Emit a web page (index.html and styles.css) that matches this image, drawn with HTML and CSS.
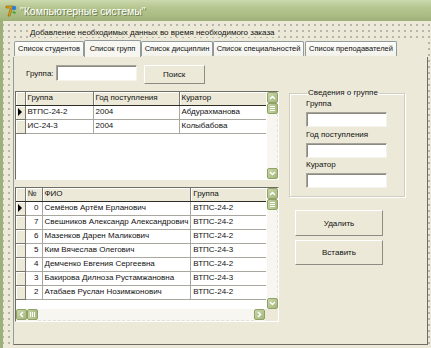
FILE: index.html
```html
<!DOCTYPE html>
<html lang="ru">
<head>
  <meta charset="UTF-8">
  <title>Компьютерные системы</title>
  <link rel="stylesheet" href="styles.css">
</head>
<body>

  <div class="window">
    <!-- заголовок окна -->
    <div class="titlebar">
      <svg class="app-icon" width="12" height="13" viewBox="0 0 12 13">
        <path d="M1 2 L8 2 L5 12 L3 12 L5.5 4 L1 4 Z" fill="#E8A317" stroke="#8A5A00" stroke-width="0.6"/>
        <circle cx="9" cy="4" r="2.3" fill="#2F7FD0"/>
        <path d="M7 8 Q10 6 11 9 Q9 11 7 8 Z" fill="#3FA33F"/>
      </svg>
      <span class="title">"Компьютерные системы"</span>
    </div>

    <div class="form">
      <div class="caption"><span>Добавление необходимых данных во время необходимого заказа</span></div>

      <div class="tabs">
        <div class="tab w1">Список студентов</div>
        <div class="tab w2 active">Список групп</div>
        <div class="tab w3">Список дисциплин</div>
        <div class="tab w4">Список специальностей</div>
        <div class="tab w5">Список преподавателей</div>
      </div>

      <div class="sheet">
        <div class="col-left">
          <div class="search">
            <span class="search-label">Группа:</span>
            <div class="edit search-edit"></div>
            <div class="btn search-btn">Поиск</div>
          </div>

          <!-- таблица групп -->
          <div class="grid grid-groups">
            <div class="grid-top">
              <div class="grid-body">
                <table>
                  <colgroup><col class="c-ind"><col style="width:68px"><col style="width:86px"><col style="width:90px"></colgroup>
                  <tr class="head"><td></td><td>Группа</td><td>Год поступления</td><td>Куратор</td></tr>
                  <tr><td class="ind"><i class="arrow"></i></td><td>ВТПС-24-2</td><td>2004</td><td>Абдурахманова</td></tr>
                  <tr><td class="ind"></td><td>ИС-24-3</td><td>2004</td><td>Колыбабова</td></tr>
                </table>
              </div>
              <div class="vscroll">
                <div class="sb-btn"><svg width="7" height="5" viewBox="0 0 7 5"><path d="M1 4 L3.5 1.5 L6 4" fill="none" stroke="#fff" stroke-width="1.5"/></svg></div>
                <div class="sb-thumb"><i></i><i></i><i></i></div>
                <div class="sb-track"></div>
                <div class="sb-btn"><svg width="7" height="5" viewBox="0 0 7 5"><path d="M1 1 L3.5 3.5 L6 1" fill="none" stroke="#fff" stroke-width="1.5"/></svg></div>
              </div>
            </div>
          </div>

          <!-- таблица студентов -->
          <div class="grid grid-students">
            <div class="grid-top">
              <div class="grid-body">
                <table>
                  <colgroup><col class="c-ind"><col style="width:17px"><col style="width:145px"><col style="width:80px"></colgroup>
                  <tr class="head"><td></td><td>№</td><td>ФИО</td><td>Группа</td></tr>
                  <tr><td class="ind"><i class="arrow"></i></td><td class="num">0</td><td>Семёнов Артём Ерланович</td><td>ВТПС-24-2</td></tr>
                  <tr><td class="ind"></td><td class="num">7</td><td>Свешников Александр Александрович</td><td>ВТПС-24-2</td></tr>
                  <tr><td class="ind"></td><td class="num">6</td><td>Мазенков Дарен Маликович</td><td>ВТПС-24-2</td></tr>
                  <tr><td class="ind"></td><td class="num">5</td><td>Ким Вячеслав Олегович</td><td>ВТПС-24-3</td></tr>
                  <tr><td class="ind"></td><td class="num">4</td><td>Демченко Евгения Сергеевна</td><td>ВТПС-24-2</td></tr>
                  <tr><td class="ind"></td><td class="num">3</td><td>Бакирова Дилноза Рустамжановна</td><td>ВТПС-24-3</td></tr>
                  <tr><td class="ind"></td><td class="num">2</td><td>Атабаев Руслан Нозимжонович</td><td>ВТПС-24-2</td></tr>
                </table>
              </div>
              <div class="vscroll">
                <div class="sb-btn"><svg width="7" height="5" viewBox="0 0 7 5"><path d="M1 4 L3.5 1.5 L6 4" fill="none" stroke="#fff" stroke-width="1.5"/></svg></div>
                <div class="sb-thumb"><i></i><i></i><i></i></div>
                <div class="sb-track"></div>
                <div class="sb-btn"><svg width="7" height="5" viewBox="0 0 7 5"><path d="M1 1 L3.5 3.5 L6 1" fill="none" stroke="#fff" stroke-width="1.5"/></svg></div>
              </div>
            </div>
            <div class="hscroll">
              <div class="sb-btn"><svg width="5" height="7" viewBox="0 0 5 7"><path d="M4 1 L1.5 3.5 L4 6" fill="none" stroke="#fff" stroke-width="1.5"/></svg></div>
              <div class="sb-thumb h"><i></i><i></i><i></i></div>
              <div class="sb-track h"></div>
              <div class="sb-btn"><svg width="5" height="7" viewBox="0 0 5 7"><path d="M1 1 L3.5 3.5 L1 6" fill="none" stroke="#fff" stroke-width="1.5"/></svg></div>
              <div class="sb-corner"></div>
            </div>
          </div>
        </div>

        <div class="col-right">
          <fieldset class="groupbox">
            <legend>Сведения о группе</legend>
            <div class="field-label first">Группа</div>
            <div class="edit field-edit"></div>
            <div class="field-label">Год поступления</div>
            <div class="edit field-edit"></div>
            <div class="field-label last">Куратор</div>
            <div class="edit field-edit"></div>
          </fieldset>
          <div class="btn big del">Удалить</div>
          <div class="btn big ins">Вставить</div>
        </div>
      </div>
    </div>
  </div>

</body>
</html>
```

FILE: styles.css
```css
* { box-sizing: border-box; }

body {
  margin: 0;
  width: 431px;
  height: 348px;
  overflow: hidden;
  background: #ECE9D8;
  color: #111;
  font-family: "Liberation Sans", Arial, sans-serif;
  font-size: 8px;
}

.window {
  height: 348px;
  display: flex;
  flex-direction: column;
}

.titlebar {
  flex: none;
  height: 21px;
  display: flex;
  align-items: center;
  gap: 3px;
  padding-left: 5px;
  background: linear-gradient(#CCD9AE, #B6C690 35%, #A8BA82 80%, #9CAF76);
}
.app-icon { flex: none; }
.title {
  color: #fff;
  font-size: 10.5px;
  text-shadow: 1px 1px 0 #6E7F4A;
}

.form {
  flex: 1;
  display: flex;
  flex-direction: column;
  padding: 0 3px 3px 10px;
  border-left: 3px solid #9DB07A;
  background-color: #ECE9D8;
  background-image: radial-gradient(circle, #444 0.5px, transparent 0.8px);
  background-size: 6px 6px;
  background-position: -3px 1px;
}

.caption {
  height: 19px;
  padding: 7px 0 0 17px;
  line-height: 10px;
}
.caption span { background: #ECE9D8; padding-right: 2px; }

/* вкладки */
.tabs {
  display: flex;
  align-items: flex-end;
  height: 17px;
  padding-left: 1px;
  background: #ECE9D8;
  position: relative;
  z-index: 1;
  font-size: 7.5px;
}
.tab {
  height: 15px;
  line-height: 13px;
  text-align: center;
  white-space: nowrap;
  overflow: hidden;
  border: 1px solid #919B9C;
  border-bottom: none;
  border-radius: 2px 2px 0 0;
  background: linear-gradient(#FDFDFB, #F2F1EA);
  margin-bottom: 1px;
}
.tab.active {
  height: 17px;
  line-height: 15px;
  margin-bottom: 0;
  background: #F7F6F1;
}
.w1 { width: 70px; }
.w2 { width: 57px; }
.w3 { width: 72px; }
.w4 { width: 91px; }
.w5 { width: 92px; margin-left: 1px; }

.sheet {
  flex: 1;
  display: flex;
  margin-top: -1px;
  border: 1px solid #919B9C;
  border-right-color: #6F6E66;
  border-bottom-color: #6F6E66;
  background: #ECE9D8;
}

.col-left {
  width: 264px;
  margin-left: 1px;
  display: flex;
  flex-direction: column;
}

.search {
  display: flex;
  align-items: flex-start;
  height: 19px;
  margin-top: 8px;
}
.search-label { margin: 4px 2px 0 11px; line-height: 10px; }
.search-edit { width: 81px; height: 16px; }
.search-btn { width: 61px; height: 19px; margin-left: 7px; }

.edit {
  background: #fff;
  border: 1px solid #A6A49A;
  border-right-color: #F4F3EE;
  border-bottom-color: #F4F3EE;
  box-shadow: inset 1px 1px 0 #8C8A80;
}

.btn {
  display: flex;
  align-items: center;
  justify-content: center;
  border: 1px solid;
  border-color: #fff #8E8C82 #8E8C82 #fff;
  background: #ECE9D8;
}

/* таблицы */
.grid {
  width: 264px;
  margin-top: 7px;
  display: flex;
  flex-direction: column;
  border: 1px solid;
  border-color: #6F6E66 #fff #fff #6F6E66;
  background: #fff;
}
.grid-groups { height: 89px; }
.grid-students { height: 135px; }
.grid-top { flex: 1; display: flex; min-height: 0; }
.grid-body { flex: 1; overflow: hidden; }

table {
  border-collapse: collapse;
  table-layout: fixed;
  width: max-content;
}
.c-ind { width: 9px; }
td {
  height: 14px;
  padding: 0 2px;
  white-space: nowrap;
  overflow: hidden;
  line-height: 10px;
  border-right: 1px solid #A8A8A0;
  border-bottom: 1px solid #A8A8A0;
}
tr.head td {
  height: 13px;
  background: #ECE9D8;
  border-right-color: #7A786E;
  border-bottom-color: #2E2D28;
  box-shadow: inset 1px 1px 0 #fff;
}
td.ind {
  padding: 0;
  background: #ECE9D8;
  border-right-color: #7A786E;
  border-bottom-color: #7A786E;
  box-shadow: inset 1px 1px 0 #fff;
}
td.num { text-align: right; padding-right: 3px; }
.arrow {
  display: block;
  width: 0;
  height: 0;
  margin-left: 2px;
  border-left: 4px solid #000;
  border-top: 4px solid transparent;
  border-bottom: 4px solid transparent;
}

/* полосы прокрутки */
.vscroll {
  width: 12px;
  display: flex;
  flex-direction: column;
  background: #F7F6F1;
  border-left: 1px solid #fff;
}
.sb-btn {
  flex: none;
  width: 11px;
  height: 11px;
  display: flex;
  align-items: center;
  justify-content: center;
  border-radius: 2px;
  border: 1px solid #8EA266;
  background: linear-gradient(135deg, #C9D6A8, #A5B77E);
}
.sb-thumb {
  flex: none;
  width: 11px;
  height: 11px;
  display: flex;
  flex-direction: column;
  align-items: center;
  justify-content: center;
  gap: 1px;
  border-radius: 2px;
  border: 1px solid #8EA266;
  background: linear-gradient(90deg, #C3D1A0, #A9BA83);
}
.sb-thumb i { display: block; width: 5px; height: 1px; background: #fff; }
.sb-thumb.h { flex-direction: row; }
.sb-thumb.h i { width: 1px; height: 5px; }
.sb-track {
  flex: 1;
  border-right: 1px dashed #E2E0D6;
}
.sb-track.h { border-right: none; border-bottom: 1px dashed #E2E0D6; }

.hscroll {
  flex: none;
  height: 12px;
  display: flex;
  background: #F7F6F1;
}
.sb-corner { width: 13px; background: #ECE9D8; }

/* правая колонка */
.col-right {
  margin-left: 10px;
  display: flex;
  flex-direction: column;
}

.groupbox {
  width: 116px;
  height: 108px;
  margin: 32px 0 0;
  padding: 2px 0 0 16px;
  border: 1px solid #D0CEBF;
  box-shadow: inset 1px 1px 0 #fff, 1px 1px 0 #fff;
}
.groupbox legend {
  padding: 0 1px;
  margin-left: 1px;
  line-height: 8px;
}
.field-label { line-height: 10px; margin-top: 3px; }
.field-label.first { margin-top: 0; }
.field-label.last { margin-top: 2px; }
.field-edit { width: 81px; height: 15px; margin-top: 3px; }

.big { width: 88px; margin-left: 6px; }
.del { height: 26px; margin-top: 13px; }
.ins { height: 25px; margin-top: 4px; }
```
